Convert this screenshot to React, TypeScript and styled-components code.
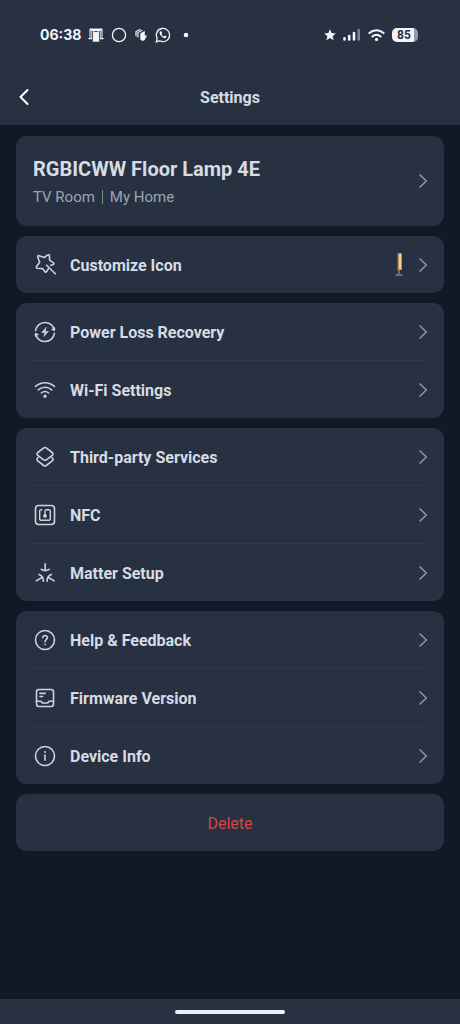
import React from "react";
import styled, { createGlobalStyle } from "styled-components";

const GlobalStyle = createGlobalStyle`
  * { box-sizing: border-box; }
  body { margin: 0; background: #121826; }
  button { font: inherit; color: inherit; border: 0; background: none; padding: 0; cursor: pointer; }
`;

const Screen = styled.div`
  min-height: 100vh;
  display: flex;
  flex-direction: column;
  background: #121826;
  color: #d7dbe3;
  font-family: Roboto, "Liberation Sans", sans-serif;
`;

const Header = styled.header`
  background: #273142;
`;

const StatusBar = styled.div`
  height: 69px;
  padding: 0 42px 0 40px;
  display: flex;
  align-items: center;
  justify-content: space-between;
  color: #f3f4fa;
`;

const StatusGroup = styled.div`
  display: flex;
  align-items: center;
  gap: 7px;
`;

const Clock = styled.time`
  font: 700 14px/20px Inter, sans-serif;
`;

const Battery = styled.span`
  display: flex;
  align-items: center;
  justify-content: center;
  width: 26px;
  height: 14px;
  padding-right: 2px;
  border-radius: 5px;
  background: linear-gradient(90deg, #f3f4fa 84%, #9299a7 84%);
  color: #273142;
  font: 700 12px/14px Roboto, sans-serif;
`;

const NavBar = styled.div`
  height: 56px;
  padding: 0 12px;
  display: grid;
  grid-template-columns: 24px 1fr 24px;
  align-items: center;
`;

const BackButton = styled.button`
  display: flex;
  color: #ffffff;
`;

const PageTitle = styled.h1`
  margin: 0;
  padding-top: 2px;
  text-align: center;
  font-size: 16px;
  line-height: 24px;
  font-weight: 700;
`;

const Content = styled.main`
  flex: 1;
  display: flex;
  flex-direction: column;
  gap: 10px;
  padding: 11px 16px;
`;

const Card = styled.section`
  border-radius: 11px;
  background: #273142;
  padding: 0 16px 0 17px;
`;

const DeviceButton = styled.button`
  width: 100%;
  height: 90px;
  display: flex;
  align-items: center;
  justify-content: space-between;
  text-align: left;
`;

const DeviceText = styled.span`
  display: flex;
  flex-direction: column;
  gap: 4px;
`;

const DeviceName = styled.span`
  font-size: 20px;
  line-height: 28px;
  font-weight: 700;
`;

const Location = styled.span`
  display: flex;
  align-items: center;
  gap: 7px;
  font-size: 15px;
  line-height: 20px;
  color: #9da4b1;
`;

const LocationDivider = styled.span`
  width: 1px;
  height: 14px;
  background: #7d8594;
`;

const List = styled.ul`
  list-style: none;
  margin: 0;
  padding: 0;
`;

const ListItem = styled.li`
  & + & {
    border-top: 1px solid #303a4b;
  }
`;

const RowButton = styled.button`
  width: 100%;
  height: 57px;
  display: flex;
  align-items: center;
  text-align: left;
`;

const RowLabel = styled.span`
  flex: 1;
  margin-left: 13px;
  padding-top: 2px;
  font-size: 16px;
  line-height: 24px;
  font-weight: 700;
`;

const RowValue = styled.span`
  display: flex;
  margin-right: 15px;
`;

const DeleteButton = styled.button`
  width: 100%;
  height: 57px;
  padding-top: 2px;
  border-radius: 11px;
  background: #273142;
  color: #d9453f;
  font-size: 16px;
  line-height: 24px;
`;

const GestureBar = styled.footer`
  height: 25px;
  display: flex;
  align-items: center;
  justify-content: center;
  background: #273142;
`;

const GestureHandle = styled.span`
  width: 110px;
  height: 4px;
  border-radius: 2px;
  background: #eeeff8;
`;

const LineIcon = styled.svg.attrs({ width: 24, height: 24, viewBox: "0 0 24 24", "aria-hidden": true })`
  flex: none;
  fill: none;
  stroke: #ccd2dd;
  stroke-width: 1.6;
  stroke-linecap: round;
  stroke-linejoin: round;
`;

const Chevron = () => (
  <svg width="10" height="16" viewBox="0 0 10 16" fill="none" stroke="#8e96a5" strokeWidth="1.5" aria-hidden="true">
    <path d="M1.5 1.5 8.3 8l-6.8 6.5" />
  </svg>
);

const WandIcon = () => (
  <LineIcon>
    <path d="M15.400 15.600 13.600 18.600Q12.700 19.800 11.800 18.500L9.500 15.600 4.200 15.200Q2.800 14.700 3.700 13.200L6.700 9.300 4.700 4Q4.500 2.400 6.100 2.700L11.200 4.500 14.800 1.900Q16.300 1.200 16.400 2.900L16.600 7.100 20.500 9.900Q21.500 11 20 11.700L17.800 12.300" />
    <path d="m13.600 12.200 8.700 8.600" />
  </LineIcon>
);

const PowerIcon = () => (
  <LineIcon>
    <path d="M2.600 10.600A9.500 9.500 0 0 1 21.300 10M21.400 13.400A9.500 9.500 0 0 1 2.700 14" />
    <path d="M2.600 14v1.900M2.700 14l2 .6M21.400 10V8.100M21.300 10l-2-.6" />
    <path d="M13 7.600 8.600 12.500h3l-.6 3.900 4.400-5h-3z" fill="#ccd2dd" strokeWidth=".6" />
  </LineIcon>
);

const WifiIcon = () => (
  <LineIcon>
    <path d="M2.500 8.400a14 14 0 0 1 19 0M5.300 11.800a10 10 0 0 1 13.400 0M8.300 15a5.800 5.800 0 0 1 7.400 0" />
    <circle cx="12" cy="18.200" r="1.600" fill="#ccd2dd" stroke="none" />
  </LineIcon>
);

const LayersIcon = () => (
  <LineIcon>
    <path d="M10.800 2.900a2.100 2.100 0 0 1 2.400 0l6 4.600a1.700 1.700 0 0 1 0 2.800l-5.900 4.500a2.200 2.200 0 0 1-2.600 0L4.800 10.300a1.700 1.700 0 0 1 0-2.800z" />
    <path d="M5 12.600c-1.400 1-1.400 2.400-.2 3.300l5.900 4.600a2.200 2.200 0 0 0 2.600 0l5.900-4.600c1.200-.9 1.200-2.300-.2-3.300" />
  </LineIcon>
);

const NfcIcon = () => (
  <LineIcon>
    <rect x="2.500" y="2.500" width="19" height="19" rx="3.200" />
    <path d="M8.800 6.800H8A1.300 1.300 0 0 0 6.700 8.100v7.800A1.300 1.300 0 0 0 8 17.200h8a1.300 1.300 0 0 0 1.300-1.300V8.100A1.300 1.300 0 0 0 16 6.800h-2.700a1.300 1.300 0 0 0-1.300 1.300v4.500" strokeWidth="1.400" />
    <circle cx="12" cy="12.900" r="1.900" fill="#ccd2dd" stroke="none" />
  </LineIcon>
);

const MatterIcon = () => (
  <LineIcon>
    <path d="M12.200 2.800v6.600M8.200 8.400c2.300 1.500 5.700 1.500 8 0" />
    <path d="m3.200 19.900 5.800-3.400M6 13.400c2.900 1.100 4.600 3.900 4.300 6.900" />
    <path d="m21.200 19.900-5.800-3.400M18.400 13.400c-2.900 1.100-4.600 3.900-4.300 6.900" />
  </LineIcon>
);

const HelpIcon = () => (
  <LineIcon>
    <circle cx="12" cy="12" r="9.500" />
    <path d="M9.700 9.800c0-3.200 4.800-3 4.700-.1 0 1.800-2.300 1.800-2.300 4" />
    <circle cx="12.100" cy="16.300" r=".9" fill="#ccd2dd" stroke="none" />
  </LineIcon>
);

const FirmwareIcon = () => (
  <LineIcon>
    <rect x="3.500" y="3.500" width="17" height="17" rx="2.500" />
    <path d="M3.500 15.300H8l1.300 1.700h5.400l1.300-1.700h4.500M7 7.400h5.300M7 10.500h2.600" />
  </LineIcon>
);

const InfoIcon = () => (
  <LineIcon>
    <circle cx="12" cy="12" r="9.500" />
    <path d="M12 11v5.300" />
    <circle cx="12" cy="8" r="1" fill="#ccd2dd" stroke="none" />
  </LineIcon>
);

const LampIcon = () => (
  <svg width="8" height="24" viewBox="0 0 8 24" aria-hidden="true">
    <path d="M3 17h2v4H3zM1 21h6l1 2H0z" fill="#686f7c" />
    <rect x="2" width="2" height="18" fill="#6d5a45" />
    <rect x="3" width="4" height="17" fill="#b98a4a" />
    <rect x="4" y="1" width="2" height="15" fill="#f7d488" />
  </svg>
);

const NotificationIcons = () => (
  <>
    <svg width="16" height="16" viewBox="0 0 16 16" fill="#f3f4fa" aria-hidden="true">
      <path d="M1.500 1.500h13v9.500h1v1.200h-3.500V4H4v8.200H.5V11h1z" />
      <path d="M4.800 4.200h1.500c.2.900 3.200.9 3.400 0h1.500v10.600H4.800z" />
      <path d="M2.900 3.500V11M13.100 3.500V11" stroke="#273142" strokeWidth=".8" />
    </svg>
    <svg width="16" height="16" viewBox="0 0 16 16" fill="none" stroke="#f3f4fa" strokeWidth="1.300" aria-hidden="true">
      <circle cx="8" cy="8" r="6.600" />
    </svg>
    <svg width="14" height="16" viewBox="0 0 14 16" fill="#f3f4fa" aria-hidden="true">
      <path d="m6.300 6.200 4.500-2.300v4.900l1.500-.6.500.8-2.300 4.300-2.200.8-2-1.500z" />
      <path d="M2 9.200V4.500L6.300 2.300M3.900 10.600V5.500L8.300 3.200" fill="none" stroke="#f3f4fa" strokeWidth="1.200" />
    </svg>
    <svg width="16" height="16" viewBox="0 0 16 16" fill="none" stroke="#f3f4fa" strokeWidth="1.300" aria-hidden="true">
      <path d="m1.200 14.800 1-3.600A6.600 6.600 0 1 1 4.800 13.800z" />
      <path d="M5.300 4.300c-1.300 1-.8 3 1 4.900s3.900 2.600 5 1.200l.2-.9-1.700-.9-1 .9C7.700 9.100 7 8.300 6.500 7.200l.7-.9-.8-2z" fill="#f3f4fa" stroke="none" />
    </svg>
    <svg width="16" height="16" viewBox="0 0 16 16" fill="#f3f4fa" aria-hidden="true">
      <circle cx="8" cy="8" r="2.300" />
    </svg>
  </>
);

const SystemIcons = () => (
  <>
    <svg width="12" height="12" viewBox="0 0 12 12" fill="#f3f4fa" aria-hidden="true">
      <path d="m6 .3 1.600 3.800 4.200.4-3.200 2.700 1 4.100L6 9.100l-3.600 2.200 1-4.100L.2 4.500l4.200-.4z" />
    </svg>
    <svg width="18" height="14" viewBox="0 0 18 14" fill="none" stroke="#f3f4fa" strokeWidth="2.600" strokeLinecap="round" aria-hidden="true">
      <path d="M1.500 10.300v1.200M6.200 8v3.500M11 5v6.500" />
      <path d="M15.700 2v9.500" stroke="#7c8493" />
    </svg>
    <svg width="17" height="14" viewBox="0 0 18 14" fill="none" stroke="#f3f4fa" strokeWidth="2.200" strokeLinecap="round" aria-hidden="true">
      <path d="M1.500 5a11 11 0 0 1 15 0M4.700 8.600a6.300 6.300 0 0 1 8.600 0" />
      <circle cx="9" cy="11.700" r="1.700" fill="#f3f4fa" stroke="none" />
    </svg>
  </>
);

type Row = { label: string; Icon: React.FC; value?: React.ReactNode };

const groups: Row[][] = [
  [{ label: "Customize Icon", Icon: WandIcon, value: <LampIcon /> }],
  [
    { label: "Power Loss Recovery", Icon: PowerIcon },
    { label: "Wi-Fi Settings", Icon: WifiIcon },
  ],
  [
    { label: "Third-party Services", Icon: LayersIcon },
    { label: "NFC", Icon: NfcIcon },
    { label: "Matter Setup", Icon: MatterIcon },
  ],
  [
    { label: "Help & Feedback", Icon: HelpIcon },
    { label: "Firmware Version", Icon: FirmwareIcon },
    { label: "Device Info", Icon: InfoIcon },
  ],
];

const SettingsRow = ({ label, Icon, value }: Row) => (
  <ListItem>
    <RowButton type="button">
      <Icon />
      <RowLabel>{label}</RowLabel>
      {value && <RowValue>{value}</RowValue>}
      <Chevron />
    </RowButton>
  </ListItem>
);

export default function App() {
  return (
    <Screen>
      <GlobalStyle />
      <Header>
        <StatusBar>
          <StatusGroup>
            <Clock>06:38</Clock>
            <NotificationIcons />
          </StatusGroup>
          <StatusGroup>
            <SystemIcons />
            <Battery>85</Battery>
          </StatusGroup>
        </StatusBar>
        <NavBar>
          <BackButton type="button" aria-label="Back">
            <svg width="24" height="24" viewBox="0 0 24 24" fill="none" stroke="currentColor" strokeWidth="2" strokeLinecap="round" strokeLinejoin="round" aria-hidden="true">
              <path d="M15.500 5 8.500 12l7 7" />
            </svg>
          </BackButton>
          <PageTitle>Settings</PageTitle>
        </NavBar>
      </Header>
      <Content>
        <Card>
          <DeviceButton type="button">
            <DeviceText>
              <DeviceName>RGBICWW Floor Lamp 4E</DeviceName>
              <Location>
                <span>TV Room</span>
                <LocationDivider />
                <span>My Home</span>
              </Location>
            </DeviceText>
            <Chevron />
          </DeviceButton>
        </Card>
        {groups.map((rows) => (
          <Card key={rows[0].label}>
            <List>
              {rows.map((row) => (
                <SettingsRow key={row.label} {...row} />
              ))}
            </List>
          </Card>
        ))}
        <DeleteButton type="button">Delete</DeleteButton>
      </Content>
      <GestureBar>
        <GestureHandle />
      </GestureBar>
    </Screen>
  );
}
